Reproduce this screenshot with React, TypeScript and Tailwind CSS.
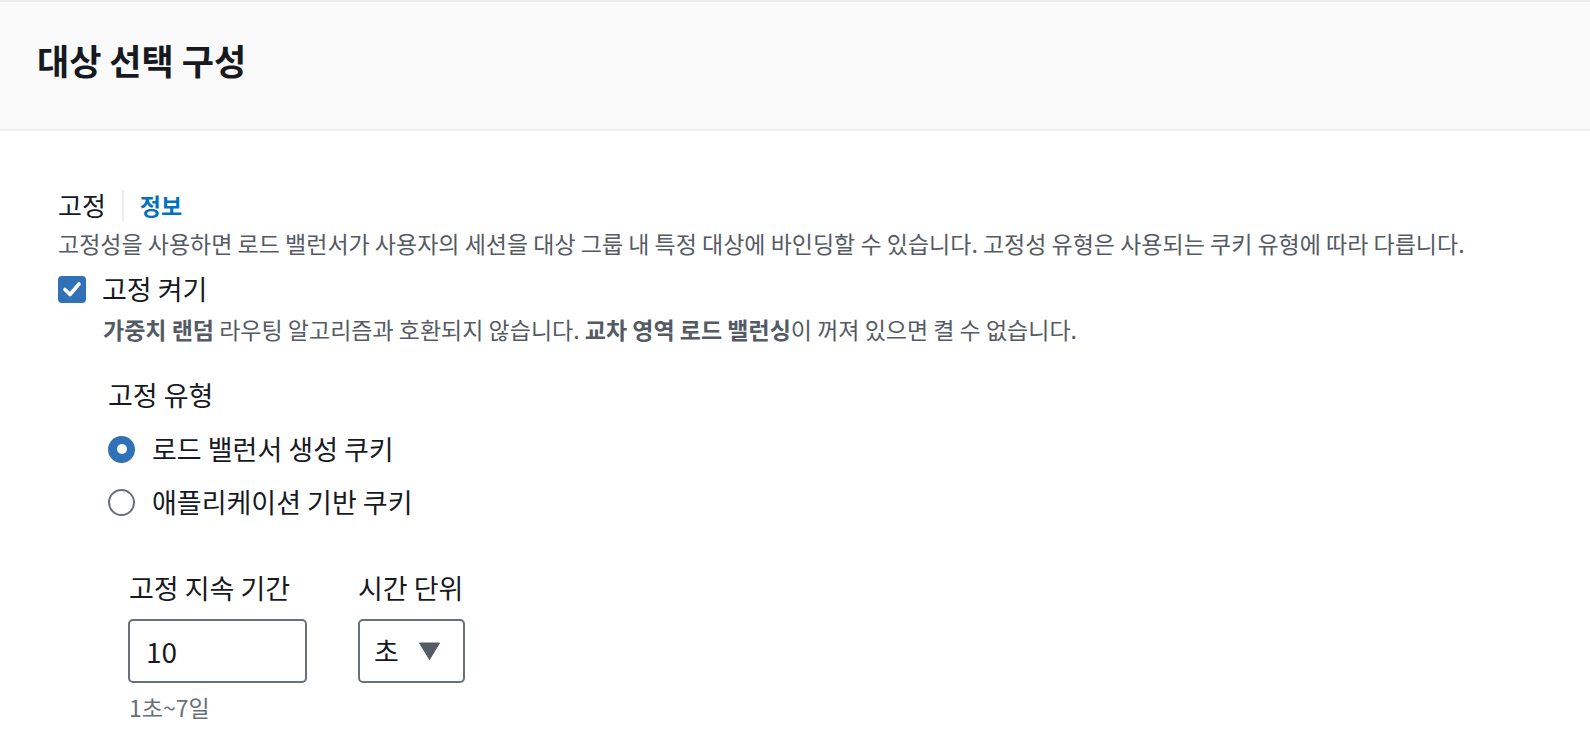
import React from "react";

export default function App() {
  return (
    <div className="min-h-screen w-full bg-white font-['Noto_Sans_CJK_KR',sans-serif] text-[#16191f]">
      <div className="flex h-[131px] items-center border-y-2 border-[#eaeded] bg-[#fafafa] pb-[12px] pl-[37px]">
        <h2 className="text-[35px] font-bold leading-[40px] text-[#16191f]">대상 선택 구성</h2>
      </div>

      <div className="flex flex-col pl-[58px] pt-[58px]">
        <div className="flex h-[32px] items-center">
          <span className="text-[26px] leading-[32px]">고정</span>
          <span className="ml-[16px] h-[31px] w-[2px] bg-[#eaeded]" />
          <span className="ml-[16px] text-[23px] font-bold leading-[32px] text-[#0073bb]">정보</span>
        </div>
        <p className="mt-[8px] text-[23px] leading-[28px] text-[#545b64]">
          고정성을 사용하면 로드 밸런서가 사용자의 세션을 대상 그룹 내 특정 대상에 바인딩할 수 있습니다. 고정성 유형은 사용되는 쿠키 유형에 따라 다릅니다.
        </p>

        <div className="mt-[16px] flex h-[32px] items-center">
          <span className="flex h-[27px] w-[28px] items-center justify-center rounded-[4px] bg-[#3171b8]">
            <svg width="20" height="18" viewBox="0 0 20 18" fill="none">
              <path d="M3 9.5 L8 14.5 L17 4" stroke="white" strokeWidth="3.6" strokeLinecap="round" strokeLinejoin="round" />
            </svg>
          </span>
          <span className="ml-[16px] text-[27px] leading-[32px]">고정 켜기</span>
        </div>
        <p className="mt-[10px] pl-[45px] text-[23px] leading-[28px] text-[#545b64]">
          <b className="font-bold">가중치 랜덤</b> 라우팅 알고리즘과 호환되지 않습니다. <b className="font-bold">교차 영역 로드 밸런싱</b>이 꺼져 있으면 켤 수 없습니다.
        </p>

        <div className="flex flex-col pl-[50px]">
          <span className="mt-[36px] text-[27px] leading-[32px]">고정 유형</span>
          <div className="mt-[22px] flex h-[32px] items-center">
            <span className="flex h-[27px] w-[27px] items-center justify-center rounded-full bg-[#3171b8]">
              <span className="h-[10px] w-[10px] rounded-full bg-white" />
            </span>
            <span className="ml-[17px] text-[27px] leading-[32px]">로드 밸런서 생성 쿠키</span>
          </div>
          <div className="mt-[21px] flex h-[32px] items-center">
            <span className="h-[27px] w-[27px] rounded-full border-2 border-[#687078] bg-white" />
            <span className="ml-[17px] text-[27px] leading-[32px]">애플리케이션 기반 쿠키</span>
          </div>
        </div>

        <div className="mt-[54px] flex gap-[51px] pl-[70px]">
          <div className="flex w-[179px] flex-col">
            <span className="whitespace-nowrap pl-[1px] text-[27px] leading-[32px]">고정 지속 기간</span>
            <div className="mt-[15px] flex h-[64px] items-center rounded-[5px] border-2 border-[#687078] pl-[16px]">
              <span className="text-[28px] leading-[32px]">10</span>
            </div>
            <span className="mt-[10px] pl-[1px] text-[23px] leading-[28px] text-[#687078]">1초~7일</span>
          </div>
          <div className="flex flex-col">
            <span className="whitespace-nowrap text-[27px] leading-[32px]">시간 단위</span>
            <div className="mt-[15px] flex h-[64px] w-[107px] items-center rounded-[5px] border-2 border-[#687078] pl-[14px]">
              <span className="text-[27px] leading-[32px]">초</span>
              <svg className="ml-[20px]" width="21" height="18" viewBox="0 0 21 18">
                <path d="M0.5 1 L20.5 1 L10.5 17.5 Z" fill="#545b64" stroke="#545b64" strokeWidth="1" strokeLinejoin="round" />
              </svg>
            </div>
          </div>
        </div>
      </div>
    </div>
  );
}
